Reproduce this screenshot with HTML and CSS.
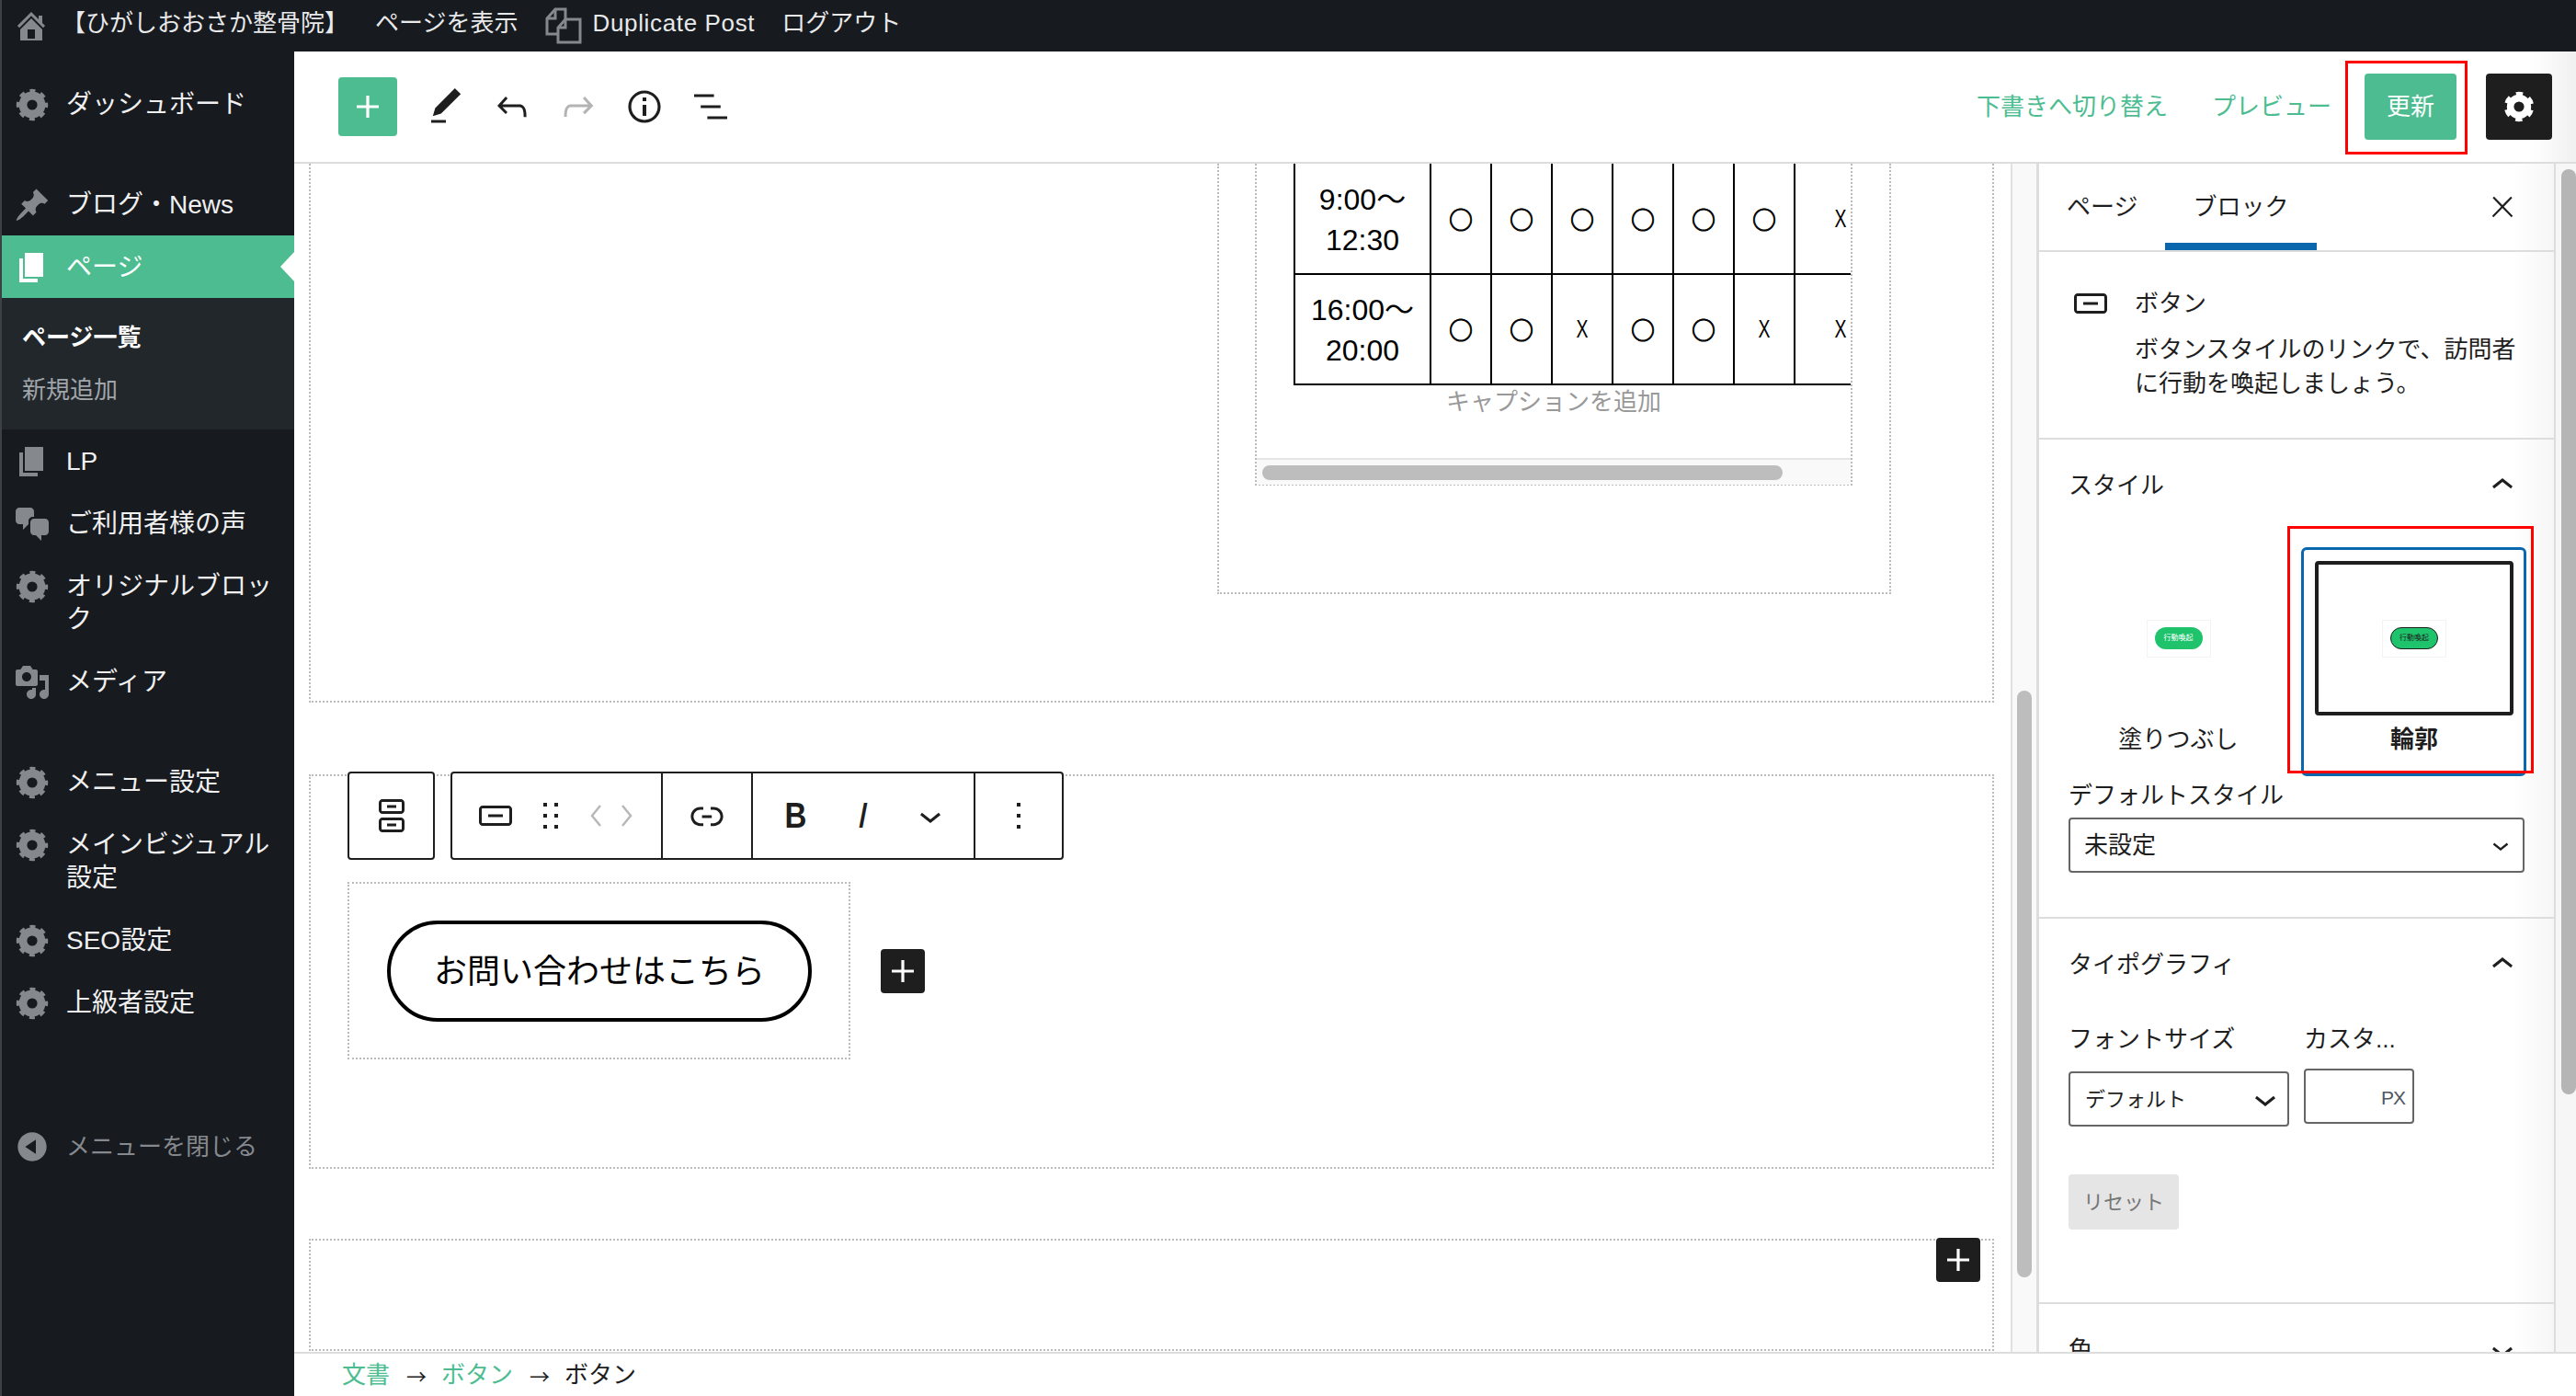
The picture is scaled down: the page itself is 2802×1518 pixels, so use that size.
FILE: index.html
```html
<!DOCTYPE html>
<html lang="ja">
<head>
    <meta charset="UTF-8">
    <title>ページを編集</title>
    <link rel="stylesheet" href="styles.css">
</head>
<body>

<!-- Icon sprite -->
<svg class="sprite" xmlns="http://www.w3.org/2000/svg">
    <symbol id="i-gear" viewBox="0 0 20 20">
        <circle cx="10" cy="10" r="5" fill="none" stroke="currentColor" stroke-width="4.4"/>
        <circle cx="10" cy="10" r="7.4" fill="none" stroke="currentColor" stroke-width="2.4" stroke-dasharray="2.9 2.91" stroke-dashoffset="1.45"/>
    </symbol>
    <symbol id="i-cog" viewBox="0 0 24 24">
        <circle cx="12" cy="12" r="4.7" fill="none" stroke="currentColor" stroke-width="3.8"/>
        <circle cx="12" cy="12" r="6.7" fill="none" stroke="currentColor" stroke-width="2.8" stroke-dasharray="3.5 3.52" stroke-dashoffset="-1.76"/>
    </symbol>
    <symbol id="i-pin" viewBox="0 0 20 20"><path d="M10.44 3.02l1.82-1.82 6.36 6.35-1.83 1.82c-1.05-.68-2.48-.57-3.41.36l-.75.75c-.92.93-1.04 2.35-.35 3.41l-1.83 1.82-2.41-2.41-2.8 2.79c-.42.42-3.38 2.71-3.8 2.29s1.86-3.39 2.28-3.81l2.79-2.79L4.1 9.36l1.83-1.82c1.05.69 2.48.57 3.4-.36l.75-.75c.93-.92 1.05-2.35.36-3.41z"/></symbol>
    <symbol id="i-page" viewBox="0 0 20 20"><path d="M6 15V2h10v13H6zm-1 1h8v2H3V5h2v11z"/></symbol>
    <symbol id="i-chat" viewBox="0 0 20 20"><path d="M11 6h-.82C9.07 6 8 7.2 8 8.16V10l-3 3v-3H3c-1.1 0-2-.9-2-2V3c0-1.1.9-2 2-2h6c1.1 0 2 .9 2 2v3zm0 1h6c1.1 0 2 .9 2 2v5c0 1.1-.9 2-2 2h-2v3l-3-3h-1c-1.1 0-2-.9-2-2V9c0-1.1.9-2 2-2z"/></symbol>
    <symbol id="i-media" viewBox="0 0 20 20"><path d="M13 11V4c0-.55-.45-1-1-1h-1.67L9 1H5L3.67 3H2c-.55 0-1 .45-1 1v7c0 .55.45 1 1 1h10c.55 0 1-.45 1-1zM7 4.5c1.38 0 2.5 1.12 2.5 2.5S8.38 9.5 7 9.5 4.5 8.38 4.5 7 5.62 4.5 7 4.5zM14 6h5v10.5c0 1.38-1.12 2.5-2.5 2.5S14 17.88 14 16.5s1.12-2.5 2.5-2.5c.17 0 .34.02.5.05V9h-3V6zm-4 8.05V13h2v3.5c0 1.38-1.12 2.5-2.5 2.5S7 17.88 7 16.5 8.12 14 9.5 14c.17 0 .34.02.5.05z"/></symbol>
    <symbol id="i-home" viewBox="0 0 20 20"><path d="M16 8.5l1.53 1.53-1.06 1.06L10 4.62l-6.47 6.47-1.06-1.06L10 2.5l4 4v-2h2v4zm-6-2.46l6 5.99V18H4v-5.97zM12 17v-5H8v5h4z"/></symbol>
    <symbol id="i-collapse" viewBox="0 0 20 20"><path d="M10 2.16c4.33 0 7.84 3.51 7.84 7.84s-3.51 7.84-7.84 7.84S2.16 14.33 2.16 10 5.71 2.16 10 2.16zm2 11.72V6.12L6.18 9.97z"/></symbol>
    <symbol id="i-plus" viewBox="0 0 24 24"><path d="M18 11.2h-5.2V6h-1.6v5.2H6v1.6h5.2V18h1.6v-5.2H18z"/></symbol>
    <symbol id="i-button" viewBox="0 0 24 24"><path d="M19 6.5H5c-1.1 0-2 .9-2 2v7c0 1.1.9 2 2 2h14c1.1 0 2-.9 2-2v-7c0-1.1-.9-2-2-2zm.5 9c0 .3-.2.5-.5.5H5c-.3 0-.5-.2-.5-.5v-7c0-.3.2-.5.5-.5h14c.3 0 .5.2.5.5v7zM8 12.8h8v-1.5H8v1.5z"/></symbol>
    <symbol id="i-down" viewBox="0 0 24 24"><path d="M17.5 11.6L12 16l-5.5-4.4.9-1.2L12 14l4.5-3.6 1 1.2z"/></symbol>
    <symbol id="i-up" viewBox="0 0 24 24"><path d="M6.5 12.4L12 8l5.5 4.4-.9 1.2L12 10l-4.5 3.6-1-1.2z"/></symbol>
</svg>

<header class="adminbar">
    <svg class="menu-icon home"><use href="#i-home"/></svg>
    <span class="site-name">【ひがしおおさか整骨院】</span>
    <span>ページを表示</span>
    <span class="dup">
        <svg class="dup-icon" viewBox="0 0 40 40" fill="none" stroke="currentColor" stroke-width="3">
            <path d="M14 29H2V12l9-10h11v11"/>
            <path d="M2 12h9V2"/>
            <path d="M22 13h16v25H14V22z"/>
            <path d="M14 22h8v-9"/>
        </svg>
        <span class="dup-text">Duplicate Post</span>
    </span>
    <span>ログアウト</span>
</header>

<div class="main">
    <nav class="sidebar">
        <a class="menu-item first"><svg class="menu-icon"><use href="#i-gear"/></svg><span>ダッシュボード</span></a>
        <a class="menu-item sep"><svg class="menu-icon"><use href="#i-pin"/></svg><span>ブログ・News</span></a>
        <a class="menu-item active"><svg class="menu-icon"><use href="#i-page"/></svg><span>ページ</span></a>
        <div class="submenu">
            <a class="sub-item current">ページ一覧</a>
            <a class="sub-item">新規追加</a>
        </div>
        <a class="menu-item"><svg class="menu-icon"><use href="#i-page"/></svg><span>LP</span></a>
        <a class="menu-item"><svg class="menu-icon"><use href="#i-chat"/></svg><span>ご利用者様の声</span></a>
        <a class="menu-item"><svg class="menu-icon"><use href="#i-gear"/></svg><span>オリジナルブロック</span></a>
        <a class="menu-item"><svg class="menu-icon"><use href="#i-media"/></svg><span>メディア</span></a>
        <a class="menu-item sep"><svg class="menu-icon"><use href="#i-gear"/></svg><span>メニュー設定</span></a>
        <a class="menu-item"><svg class="menu-icon"><use href="#i-gear"/></svg><span>メインビジュアル設定</span></a>
        <a class="menu-item"><svg class="menu-icon"><use href="#i-gear"/></svg><span>SEO設定</span></a>
        <a class="menu-item"><svg class="menu-icon"><use href="#i-gear"/></svg><span>上級者設定</span></a>
        <a class="menu-item collapse"><svg class="menu-icon"><use href="#i-collapse"/></svg><span>メニューを閉じる</span></a>
    </nav>

    <div class="editor">
        <div class="edit-header">
            <button class="add-btn"><svg class="icon"><use href="#i-plus"/></svg></button>
            <div class="tools">
                <svg class="icon" viewBox="0 0 24 24"><path d="M20.1 5.1L16.9 2 6.2 12.7l-1.3 4.4 4.5-1.3L20.1 5.1zM4 20.8h8v-1.5H4v1.5z"/></svg>
                <svg class="icon" viewBox="0 0 24 24"><path d="M18.3 11.7c-.6-.6-1.4-.9-2.3-.9H6.7l2.9-3.3-1.1-1-4.5 5L8.5 16l1-1-2.7-2.7H16c.5 0 .9.2 1.3.5 1 1 1 3.4 1 4.5v.3h1.5v-.2c0-1.5 0-4.3-1.5-5.7z"/></svg>
                <svg class="icon off" viewBox="0 0 24 24"><path d="M15.6 6.5l-1.1 1 2.9 3.3H8c-.9 0-1.7.3-2.3.9-1.4 1.5-1.4 4.2-1.4 5.6v.2h1.5v-.3c0-1.1 0-3.5 1-4.5.3-.3.7-.5 1.3-.5h9.2L14.5 15l1.1 1.1 4.6-4.6-4.6-5z"/></svg>
                <svg class="icon" viewBox="0 0 24 24"><path d="M12 3.2c-4.8 0-8.8 3.9-8.8 8.8 0 4.8 3.9 8.8 8.8 8.8 4.8 0 8.8-3.9 8.8-8.8 0-4.8-4-8.8-8.8-8.8zm0 16c-4 0-7.2-3.3-7.2-7.2C4.8 8 8 4.8 12 4.8s7.2 3.3 7.2 7.2c0 4-3.2 7.2-7.2 7.2zM11 17h2v-6h-2v6zm0-8h2V7h-2v2z"/></svg>
                <svg class="icon" viewBox="0 0 24 24"><path d="M13.8 5.2H3v1.5h10.8V5.2zm-3.6 12v1.5H21v-1.5H10.2zm7.2-6H6.6v1.5h10.8v-1.5z"/></svg>
            </div>
            <div class="publish">
                <a class="link-draft">下書きへ切り替え</a>
                <a class="link-preview">プレビュー</a>
                <button class="update-btn">更新<span class="red-mark"></span></button>
                <button class="settings-btn"><svg class="icon"><use href="#i-cog"/></svg></button>
            </div>
        </div>

        <div class="edit-body">
            <div class="canvas">
                <section class="block block-table">
                    <div class="outer-block">
                        <div class="inner-block">
                            <div class="table-wrap">
                                <table class="hours">
                                    <tr>
                                        <td class="time">9:00〜<br>12:30</td>
                                        <td class="ok">○</td><td class="ok">○</td><td class="ok">○</td><td class="ok">○</td><td class="ok">○</td><td class="ok">○</td><td class="no"><span>X</span></td>
                                    </tr>
                                    <tr>
                                        <td class="time">16:00〜<br>20:00</td>
                                        <td class="ok">○</td><td class="ok">○</td><td class="no"><span>X</span></td><td class="ok">○</td><td class="ok">○</td><td class="no"><span>X</span></td><td class="no"><span>X</span></td>
                                    </tr>
                                </table>
                            </div>
                            <p class="caption">キャプションを追加</p>
                            <div class="h-scroll"><div class="h-thumb"></div></div>
                        </div>
                    </div>
                </section>

                <section class="block block-button">
                    <div class="block-toolbar">
                        <div class="tb-box tb-parent">
                            <svg class="icon" viewBox="0 0 24 24"><path d="M17 3H7c-1.1 0-2 .9-2 2v4c0 1.1.9 2 2 2h10c1.1 0 2-.9 2-2V5c0-1.1-.9-2-2-2zm.5 6c0 .3-.2.5-.5.5H7c-.3 0-.5-.2-.5-.5V5c0-.3.2-.5.5-.5h10c.3 0 .5.2.5.5v4zm-8-1.2h5V6.2h-5v1.6zM17 13H7c-1.1 0-2 .9-2 2v4c0 1.1.9 2 2 2h10c1.1 0 2-.9 2-2v-4c0-1.1-.9-2-2-2zm.5 6c0 .3-.2.5-.5.5H7c-.3 0-.5-.2-.5-.5v-4c0-.3.2-.5.5-.5h10c.3 0 .5.2.5.5v4zm-8-1.2h5v-1.5h-5v1.5z"/></svg>
                        </div>
                        <div class="tb-box tb-main">
                            <div class="tb-group g-move">
                                <svg class="icon"><use href="#i-button"/></svg>
                                <svg class="icon" viewBox="0 0 24 24"><path d="M8 7h2V5H8v2zm0 6h2v-2H8v2zm0 6h2v-2H8v2zm6-14v2h2V5h-2zm0 8h2v-2h-2v2zm0 6h2v-2h-2v2z"/></svg>
                                <svg class="mover" viewBox="0 0 12 24"><path d="M11 1L2 12l9 11"/></svg>
                                <svg class="mover" viewBox="0 0 12 24"><path d="M1 1l9 11L1 23"/></svg>
                            </div>
                            <div class="tb-group g-link">
                                <svg class="icon" viewBox="0 0 24 24"><path d="M15.6 7.2H14v1.5h1.6c2 0 3.7 1.7 3.7 3.7s-1.7 3.7-3.7 3.7H14v1.5h1.6c2.8 0 5.2-2.3 5.2-5.2 0-2.9-2.3-5.2-5.2-5.2zM4.7 12.4c0-2 1.7-3.7 3.7-3.7H10V7.2H8.4c-2.9 0-5.2 2.3-5.2 5.2 0 2.9 2.3 5.2 5.2 5.2H10v-1.5H8.4c-2 0-3.7-1.7-3.7-3.7zm4.6.9h5.3v-1.5H9.3v1.5z"/></svg>
                            </div>
                            <div class="tb-group g-format">
                                <span class="fmt fmt-b">B</span>
                                <span class="fmt fmt-i">I</span>
                                <span class="fmt"><svg class="icon"><use href="#i-down"/></svg></span>
                            </div>
                            <div class="tb-group g-more">
                                <svg class="icon" viewBox="0 0 24 24"><path d="M13 19h-2v-2h2v2zm0-6h-2v-2h2v2zm0-6h-2V5h2v2z"/></svg>
                            </div>
                        </div>
                    </div>

                    <div class="button-row">
                        <div class="button-wrap">
                            <a class="cta">お問い合わせはこちら</a>
                        </div>
                        <button class="inserter"><svg class="icon"><use href="#i-plus"/></svg></button>
                    </div>
                </section>

                <section class="block block-empty">
                    <button class="inserter"><svg class="icon"><use href="#i-plus"/></svg></button>
                </section>
            </div>

            <div class="canvas-scroll"><div class="canvas-thumb"></div></div>

            <aside class="panel">
                <div class="tabs">
                    <span class="tab">ページ</span>
                    <span class="tab selected">ブロック</span>
                    <svg class="close" viewBox="0 0 24 24"><path d="M13 11.8l6.1-6.3-1-1-6.1 6.2-6.1-6.2-1 1 6.1 6.3-6.5 6.7 1 1 6.5-6.6 6.5 6.6 1-1z"/></svg>
                </div>

                <div class="block-card">
                    <svg class="icon"><use href="#i-button"/></svg>
                    <div class="card-text">
                        <div>ボタン</div>
                        <p>ボタンスタイルのリンクで、訪問者に行動を喚起しましょう。</p>
                    </div>
                </div>

                <div class="section sec-style">
                    <div class="sec-head"><span>スタイル</span><svg class="icon"><use href="#i-up"/></svg></div>
                    <div class="style-grid">
                        <div class="style-tile">
                            <div class="style-preview">
                                <div class="mini-frame"><span class="mini-btn">行動喚起</span></div>
                            </div>
                            <div class="style-label">塗りつぶし</div>
                        </div>
                        <div class="style-tile picked">
                            <div class="style-preview">
                                <div class="mini-frame"><span class="mini-btn">行動喚起</span></div>
                            </div>
                            <div class="style-label">輪郭</div>
                            <span class="red-mark"></span>
                        </div>
                    </div>
                    <div class="field-label default-label">デフォルトスタイル</div>
                    <div class="select select-wide"><span>未設定</span><svg class="sel-chev"><use href="#i-down"/></svg></div>
                </div>

                <div class="section sec-type">
                    <div class="sec-head"><span>タイポグラフィ</span><svg class="icon"><use href="#i-up"/></svg></div>
                    <div class="type-row">
                        <div class="col-size">
                            <div class="field-label">フォントサイズ</div>
                            <div class="select select-size"><span>デフォルト</span><svg class="sel-chev"><use href="#i-down"/></svg></div>
                        </div>
                        <div class="col-custom">
                            <div class="field-label">カスタ...</div>
                            <div class="unit-input"><span>PX</span></div>
                        </div>
                    </div>
                    <button class="reset-btn">リセット</button>
                </div>

                <div class="section sec-color">
                    <div class="sec-head"><span>色</span><svg class="icon"><use href="#i-down"/></svg></div>
                </div>
            </aside>

            <div class="page-scroll"><div class="page-thumb"></div></div>
        </div>

        <footer class="breadcrumb">
            <a>文書</a><span class="arrow">→</span><a>ボタン</a><span class="arrow">→</span><span>ボタン</span>
        </footer>
    </div>
</div>

</body>
</html>
```

FILE: styles.css
```css
* {
    box-sizing: border-box;
}

html, body {
    height: 100%;
}

body {
    margin: 0;
    height: 1518px;
    overflow: hidden;
    display: flex;
    flex-direction: column;
    background: #fff;
    color: #1e1e1e;
    font-family: "Liberation Sans", "Noto Sans CJK JP", sans-serif;
    font-size: 26px;
    line-height: 37px;
}

button {
    border: none;
    padding: 0;
    font: inherit;
    cursor: pointer;
}

p {
    margin: 0;
}

.sprite {
    display: none;
}

.icon {
    display: block;
    flex: none;
    width: 48px;
    height: 48px;
    fill: currentColor;
}

.icon.off {
    color: #b4b4b4;
}

/* Admin bar */
.adminbar {
    flex: none;
    height: 56px;
    display: flex;
    align-items: center;
    gap: 29px;
    padding: 0 0 5px 12px;
    border-left: 2px solid #3c4146;
    background: #171a1f;
    color: #e8e9ea;
}

.menu-icon {
    flex: none;
    width: 40px;
    height: 40px;
    margin: -2px 0;
    fill: currentColor;
    color: #85898e;
}

.home {
    margin: 0 -16px 0 0;
    transform: translateY(2px);
}

.dup {
    display: flex;
    align-items: center;
    gap: 12px;
}

.dup-text {
    letter-spacing: .65px;
}

.dup-icon {
    width: 40px;
    height: 40px;
    color: #85898e;
    transform: translateY(2px);
}

/* Main layout */
.main {
    flex: 1;
    min-height: 0;
    display: flex;
}

.sidebar {
    flex: none;
    width: 320px;
    border-left: 2px solid #3c4146;
    background: #171a1f;
    font-size: 28px;
    line-height: 36px;
    color: #f0f0f1;
}

.menu-item {
    position: relative;
    display: flex;
    align-items: flex-start;
    gap: 17px;
    padding: 17px 6px 15px 13px;
}

.menu-item span {
    width: 232px;
}

.menu-item.first {
    margin-top: 23px;
}

.menu-item.sep {
    margin-top: 41px;
}

.menu-item.active {
    background: #4dbd91;
    color: #fff;
}

.menu-item.active .menu-icon {
    color: #fff;
}

/* little notch pointing at the editor */
.menu-item.active::after {
    content: "";
    position: absolute;
    right: 0;
    top: 18px;
    border: 16px solid transparent;
    border-left: none;
    border-right: 15px solid #fff;
}

.submenu {
    height: 143px;
    padding: 15px 0 0 22px;
    background: #22272c;
    font-size: 26px;
    color: #a0a5aa;
}

.sub-item {
    display: block;
    height: 57px;
    line-height: 57px;
}

.sub-item.current {
    font-weight: 700;
    color: #fff;
}

.menu-item.collapse {
    margin-top: 88px;
    font-size: 26px;
    color: #85898e;
}

/* Editor */
.editor {
    flex: 1;
    min-width: 0;
    display: flex;
    flex-direction: column;
}

.edit-header {
    flex: none;
    height: 122px;
    display: flex;
    align-items: center;
    padding: 0 26px 0 48px;
    border-bottom: 2px solid #ddd;
    background: linear-gradient(to right, #fff 98%, #f0f0f0);
}

.add-btn {
    width: 64px;
    height: 64px;
    display: flex;
    align-items: center;
    justify-content: center;
    border-radius: 4px;
    background: #4dbd91;
    color: #fff;
}

.tools {
    display: flex;
    gap: 24px;
    margin-left: 29px;
}

.publish {
    display: flex;
    align-items: center;
    margin-left: auto;
    color: #4dbd91;
}

.link-draft {
    margin-right: 48px;
}

.link-preview {
    margin-right: 36px;
}

.update-btn {
    position: relative;
    width: 100px;
    height: 72px;
    margin-right: 32px;
    border-radius: 4px;
    background: #4dbd91;
    color: #fff;
}

.settings-btn {
    width: 72px;
    height: 72px;
    display: flex;
    align-items: center;
    justify-content: center;
    border-radius: 4px;
    background: #1e1e1e;
    color: #fff;
}

/* Red marks drawn on top of the screenshot */
.red-mark {
    position: absolute;
    border: 3px solid #f00;
    pointer-events: none;
}

.update-btn .red-mark {
    top: -14px;
    right: -12px;
    bottom: -16px;
    left: -21px;
}

.style-tile .red-mark {
    top: -26px;
    right: -11px;
    bottom: 0;
    left: -18px;
}

.edit-body {
    flex: 1;
    min-height: 0;
    display: flex;
}

.canvas {
    flex: 1;
    min-width: 0;
    overflow: hidden;
    padding: 0 18px 0 16px;
}

.block {
    border: 2px dotted #bbb;
}

.block-table {
    height: 586px;
    padding-left: 986px;
    border-top: none;
}

.outer-block {
    width: 733px;
    height: 468px;
    padding-left: 39px;
    border: 2px dotted #bbb;
    border-top: none;
}

.inner-block {
    width: 650px;
    height: 350px;
    border: 2px dotted #bbb;
    border-top: none;
}

.table-wrap {
    overflow: hidden;
    padding-left: 40px;
}

.hours {
    width: 644px;
    table-layout: fixed;
    border-collapse: collapse;
    font-size: 32px;
    line-height: 44px;
    color: #000;
    text-align: center;
}

.hours td {
    height: 120px;
    padding: 0;
    border: 2px solid #000;
    width: 66px;
}

.hours tr:first-child td {
    border-top: none;
}

.hours td.time {
    width: 148px;
    padding-top: 2px;
}

.hours td:last-child {
    width: 100px;
    border-right: none;
}

.hours .ok {
    font-family: "Noto Sans CJK JP", sans-serif;
    font-size: 26px;
    font-weight: 700;
    -webkit-text-stroke: .8px #000;
}

.hours .no {
    font-size: 27px;
}

.hours .no span {
    display: inline-block;
    transform: scaleX(.72);
}

.caption {
    margin-top: 0;
    text-align: center;
    color: #999;
}

.h-scroll {
    height: 29px;
    margin-top: 42px;
    padding: 6px 0 0 6px;
    border-top: 2px solid #e5e5e5;
    background: #f9f9f9;
}

.h-thumb {
    width: 566px;
    height: 16px;
    border-radius: 8px;
    background: #bdbdbd;
}

.block-button {
    height: 429px;
    margin-top: 78px;
    padding-left: 40px;
}

.block-toolbar {
    display: flex;
    gap: 17px;
    margin-top: -5px;
}

.tb-box {
    height: 96px;
    display: flex;
    align-items: center;
    border: 2px solid #1e1e1e;
    border-radius: 4px;
    background: #fff;
}

.tb-parent {
    width: 95px;
    justify-content: center;
}

.tb-main {
    width: 667px;
}

.tb-group {
    height: 100%;
    display: flex;
    align-items: center;
    border-right: 2px solid #1e1e1e;
}

.g-move {
    width: 229px;
    padding-left: 23px;
}

.g-move .icon:nth-child(2) {
    margin-left: 12px;
}

.mover {
    width: 12px;
    height: 24px;
    margin-left: 22px;
    fill: none;
    stroke: #b8b8b8;
    stroke-width: 2.5;
}

.g-move .mover:nth-child(3) {
    margin-left: 19px;
}

.g-link {
    width: 98px;
    justify-content: center;
}

.g-format {
    width: 242px;
    padding-left: 10px;
}

.fmt {
    width: 73px;
    display: flex;
    justify-content: center;
    font-size: 39px;
    line-height: 48px;
}

.fmt-b {
    font-weight: 700;
    transform: scaleX(.85);
}

.fmt-i {
    font-style: italic;
}

.g-more {
    flex: 1;
    justify-content: center;
    border-right: none;
}

.button-row {
    display: flex;
    align-items: center;
    gap: 33px;
    margin-top: 24px;
}

.button-wrap {
    width: 547px;
    height: 193px;
    padding: 42px 0 0 41px;
    border: 2px dotted #bbb;
}

.cta {
    width: 462px;
    height: 110px;
    display: flex;
    align-items: center;
    justify-content: center;
    margin-top: -2px;
    border: 4px solid #000;
    border-radius: 55px;
    font-size: 36px;
    color: #000;
}

.inserter {
    flex: none;
    width: 48px;
    height: 48px;
    border-radius: 4px;
    background: #1e1e1e;
    color: #fff;
}

.block-empty {
    height: 122px;
    margin-top: 76px;
    display: flex;
    justify-content: flex-end;
    padding-right: 13px;
}

.block-empty .inserter {
    margin-top: -3px;
}

.canvas-scroll {
    flex: none;
    width: 31px;
    padding: 0 5px;
    border-left: 2px solid #e0e0e0;
    border-right: 3px solid #ddd;
    background: #f9f9f9;
}

.canvas-thumb {
    width: 16px;
    height: 638px;
    margin-top: 573px;
    border-radius: 8px;
    background: #bdbdbd;
}

/* Settings panel */
.panel {
    flex: none;
    width: 562px;
    overflow: hidden;
    border-right: 2px solid #ddd;
    background: linear-gradient(to right, #fff 92%, #f6f6f6);
}

.tabs {
    height: 96px;
    display: flex;
    align-items: center;
    border-bottom: 2px solid #ddd;
}

.tab {
    position: relative;
    height: 94px;
    line-height: 94px;
    padding: 0 30px;
}

.tab.selected::after {
    content: "";
    position: absolute;
    left: 0;
    right: 0;
    bottom: 0;
    height: 8px;
    background: #0a66ad;
}

.close {
    width: 36px;
    height: 36px;
    margin-left: auto;
    margin-right: 38px;
    fill: currentColor;
}

.block-card {
    height: 204px;
    display: flex;
    gap: 24px;
    padding: 32px 32px 0;
    border-bottom: 2px solid #ddd;
}

.card-text {
    margin-top: 6px;
}

.card-text p {
    width: 430px;
    margin-top: 13px;
}

.section {
    padding: 26px 32px 0;
    border-bottom: 2px solid #ddd;
}

.sec-style {
    height: 521px;
}

.sec-type {
    height: 419px;
}

.sec-head {
    display: flex;
    align-items: center;
    justify-content: space-between;
}

.style-grid {
    display: grid;
    grid-template-columns: 238px 245px;
    column-gap: 15px;
    margin-top: 43px;
}

.style-tile {
    position: relative;
    height: 249px;
    padding: 12px 11px 0 12px;
    border: 3px solid transparent;
    border-radius: 6px;
    text-align: center;
}

.style-tile.picked {
    border-color: #0a66ad;
}

.style-preview {
    height: 168px;
    display: flex;
    align-items: center;
    justify-content: center;
    border: 4px solid transparent;
    border-radius: 4px;
}

.picked .style-preview {
    border-color: #1e1e1e;
}

.mini-frame {
    width: 70px;
    height: 41px;
    display: flex;
    align-items: center;
    justify-content: center;
    border: 1px solid #f3f3f3;
}

.mini-btn {
    width: 52px;
    height: 24px;
    display: flex;
    align-items: center;
    justify-content: center;
    border-radius: 12px;
    background: #1ec36c;
    color: #fff;
    font-size: 8px;
    line-height: 1;
}

.picked .mini-btn {
    border: 1px solid #1e1e1e;
    color: #1e1e1e;
}

.style-label {
    margin-top: 8px;
}

.picked .style-label {
    font-weight: 700;
}

.field-label {
    white-space: nowrap;
}

.default-label {
    margin-top: 3px;
}

.select {
    display: flex;
    align-items: center;
    justify-content: space-between;
    border: 2px solid #666;
    border-radius: 4px;
    background: #fff;
}

.select-wide {
    height: 60px;
    margin-top: 5px;
    padding-left: 15px;
}

.select-wide .sel-chev {
    width: 36px;
    height: 36px;
    margin-right: 6px;
    fill: currentColor;
}

.type-row {
    display: flex;
    gap: 16px;
    margin-top: 39px;
}

.col-size {
    width: 240px;
}

.col-custom {
    width: 120px;
}

.select-size {
    height: 60px;
    margin-top: 16px;
    padding-left: 16px;
    font-size: 22px;
}

.select-size .sel-chev {
    width: 48px;
    height: 48px;
    margin-right: 0;
    fill: currentColor;
}

.unit-input {
    height: 60px;
    margin-top: 13px;
    display: flex;
    align-items: center;
    justify-content: flex-end;
    padding: 2px 8px 0 0;
    border: 2px solid #666;
    border-radius: 4px;
    font-size: 21px;
    letter-spacing: -1px;
    color: #50575e;
}

.reset-btn {
    display: block;
    width: 120px;
    height: 60px;
    margin-top: 52px;
    border-radius: 4px;
    background: #e5e5e5;
    color: #777;
    font-size: 22px;
}

.page-scroll {
    flex: none;
    width: 22px;
    padding-left: 6px;
    background: #f6f6f6;
}

.page-thumb {
    width: 16px;
    height: 1006px;
    margin-top: 6px;
    border-radius: 8px;
    background: #b5b5b5;
}

/* Breadcrumb */
.breadcrumb {
    flex: none;
    height: 48px;
    display: flex;
    align-items: center;
    gap: 18px;
    padding-left: 52px;
    border-top: 2px solid #ddd;
}

.breadcrumb a {
    color: #4dbd91;
}

.arrow {
    width: 20px;
    text-align: center;
    font-family: "Noto Sans CJK JP", sans-serif;
    font-size: 22px;
}
```
